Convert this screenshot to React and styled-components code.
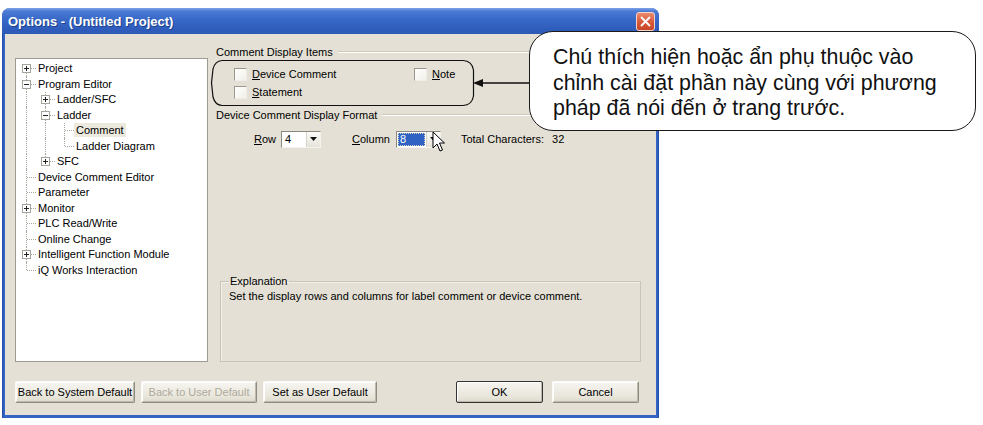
import React from "react";
import styled, { createGlobalStyle } from "styled-components";

const GlobalStyle = createGlobalStyle`
  body {
    margin: 0;
    background: #fff;
  }
`;

const UI = `"Liberation Sans", Arial, sans-serif`;

const treeItems = [
  { label: "Project", level: 0, exp: "+" },
  { label: "Program Editor", level: 0, exp: "-" },
  { label: "Ladder/SFC", level: 1, exp: "+" },
  { label: "Ladder", level: 1, exp: "-" },
  { label: "Comment", level: 2, selected: true },
  { label: "Ladder Diagram", level: 2 },
  { label: "SFC", level: 1, exp: "+" },
  { label: "Device Comment Editor", level: 0 },
  { label: "Parameter", level: 0 },
  { label: "Monitor", level: 0, exp: "+" },
  { label: "PLC Read/Write", level: 0 },
  { label: "Online Change", level: 0 },
  { label: "Intelligent Function Module", level: 0, exp: "+" },
  { label: "iQ Works Interaction", level: 0 },
];

// work out the dotted connector for every column of every row
function buildRows(items) {
  const hasNext = (idx, level) => {
    for (let j = idx + 1; j < items.length; j++) {
      if (items[j].level < level) return false;
      if (items[j].level === level) return true;
    }
    return false;
  };
  return items.map((item, i) => {
    const anc = [];
    let lvl = item.level;
    for (let j = i - 1; j >= 0 && lvl > 0; j--) {
      if (items[j].level < lvl) {
        anc.unshift(j);
        lvl = items[j].level;
      }
    }
    const cells = anc.map((a) => ({ v: hasNext(a, items[a].level) ? "full" : "none", h: false }));
    const next = hasNext(i, item.level);
    let v = next ? "full" : "top";
    if (i === 0) v = next ? "bottom" : "none";
    cells.push({ v, h: true, exp: item.exp });
    return { ...item, cells };
  });
}

function Tree() {
  const rows = buildRows(treeItems);
  return (
    <TreePanel>
      {rows.map((row) => (
        <TreeRow key={row.label}>
          {row.cells.map((c, k) => (
            <Cell key={k} $v={c.v} $h={c.h}>
              {c.exp && <Expander $plus={c.exp === "+"} />}
            </Cell>
          ))}
          <TreeLabel $selected={row.selected}>{row.label}</TreeLabel>
        </TreeRow>
      ))}
    </TreePanel>
  );
}

function Check({ children }) {
  return (
    <CheckItem>
      <Box />
      <span>{children}</span>
    </CheckItem>
  );
}

function Combo({ width, value, selected }) {
  return (
    <ComboBox style={{ width }}>
      <ComboValue $selected={selected}>{value}</ComboValue>
      <ComboArrow>
        <svg width="7" height="4" viewBox="0 0 7 4">
          <path d="M0 0h7L3.5 4z" fill="#111" />
        </svg>
      </ComboArrow>
    </ComboBox>
  );
}

export default function App() {
  return (
    <>
      <GlobalStyle />
      <Stage>
        <Window>
          <TitleBar>
            <span>Options - (Untitled Project)</span>
            <CloseButton>
              <svg width="11" height="11" viewBox="0 0 11 11">
                <path d="M1.5 1.5l8 8M9.5 1.5l-8 8" stroke="#fff" strokeWidth="1.8" strokeLinecap="round" />
              </svg>
            </CloseButton>
          </TitleBar>
          <Body>
            <Tree />
            <Settings>
              <GroupHeader>Comment Display Items</GroupHeader>
              <CheckGrid>
                <Check><u>D</u>evice Comment</Check>
                <Check><u>N</u>ote</Check>
                <Check><u>S</u>tatement</Check>
              </CheckGrid>
              <GroupHeader $top={8}>Device Comment Display Format</GroupHeader>
              <FormatRow>
                <span><u>R</u>ow</span>
                <Gap $w={5} />
                <Combo width={40} value="4" />
                <Gap $w={31} />
                <span><u>C</u>olumn</span>
                <Gap $w={6} />
                <Combo width={45} value="8" selected />
                <Gap $w={20} />
                <span>Total Characters:</span>
                <Gap $w={8} />
                <span>32</span>
              </FormatRow>
              <Explanation>
                <legend>Explanation</legend>
                <p>Set the display rows and columns for label comment or device comment.</p>
              </Explanation>
            </Settings>
            <Footer>
              <ButtonGroup $gap={6}>
                <Button $w={120}>Back to System Default</Button>
                <Button $w={116} disabled>Back to User Default</Button>
                <Button $w={114}>Set as User Default</Button>
              </ButtonGroup>
              <ButtonGroup $gap={9}>
                <Button $w={87} $default>OK</Button>
                <Button $w={87}>Cancel</Button>
              </ButtonGroup>
            </Footer>
          </Body>
        </Window>

        <Outline width="268" height="48" viewBox="0 0 268 48">
          <path
            d="M13 1.5H254Q263 2 264.5 11V37Q263 46 254 46.5H13Q6 46 4 38L2.5 24L4 10Q6 2 13 1.5Z"
            fill="none"
            stroke="#111"
            strokeWidth="1.2"
          />
        </Outline>
        <Arrow width="60" height="10" viewBox="0 0 60 10">
          <path d="M9 5H60" stroke="#111" strokeWidth="1.4" />
          <path d="M1 5L11 1V9Z" fill="#111" />
        </Arrow>
        <Cursor width="14" height="22" viewBox="0 0 14 22">
          <path d="M1 1V17L5 13L8 20L10.5 19L7.5 12H12.5Z" fill="#fff" stroke="#000" strokeWidth="1" strokeLinejoin="round" />
        </Cursor>
        <Callout>
          <span>Chú thích hiện hoặc ẩn phụ thuộc vào</span>
          <span>chỉnh cài đặt phần này cùng với phương</span>
          <span>pháp đã nói đến ở trang trước.</span>
        </Callout>
      </Stage>
    </>
  );
}

const Stage = styled.div`
  position: relative;
  width: 983px;
  height: 425px;
  overflow: hidden;
  background: #fff;
`;

const Window = styled.div`
  margin: 8px 0 0 2px;
  width: 657px;
  height: 410px;
  display: flex;
  flex-direction: column;
  background: linear-gradient(90deg, #1f4aa6, #3565c4 2px, #3565c4 calc(100% - 2px), #1f4aa6);
  border-radius: 8px 8px 0 0;
  box-sizing: border-box;
`;

const TitleBar = styled.div`
  height: 26px;
  flex: 0 0 26px;
  display: flex;
  align-items: center;
  justify-content: space-between;
  padding: 0 4px 0 6px;
  border-radius: 8px 8px 0 0;
  background: linear-gradient(180deg, #7ea3e6 0%, #4b7bd4 12%, #3868c8 45%, #2f5dbc 80%, #2d59b6 100%);
  color: #fff;
  font: bold 13px ${UI};
  text-shadow: 1px 1px 0 #1d3f8c;
`;

const CloseButton = styled.div`
  width: 19px;
  height: 19px;
  box-sizing: border-box;
  display: flex;
  align-items: center;
  justify-content: center;
  border: 1px solid #f4d5cc;
  border-radius: 3px;
  background: linear-gradient(180deg, #ec8a6c, #d8583a 55%, #c6462a);
`;

const Body = styled.div`
  flex: 1;
  margin: 0 3px 3px;
  background: #e4e0d5;
  padding: 12px 9px 12px 10px;
  display: grid;
  grid-template-columns: 193px 1fr;
  grid-template-rows: 316px 22px;
  column-gap: 5px;
  row-gap: 19px;
  font: 11px ${UI};
  color: #000;
`;

const TreePanel = styled.div`
  margin-top: 12px;
  height: 304px;
  box-sizing: border-box;
  background: #fff;
  border: 1px solid #9d9b92;
  padding: 1.5px 0 0 1px;
`;

const TreeRow = styled.div`
  display: flex;
  align-items: center;
  height: 15.5px;
  white-space: nowrap;
`;

const Cell = styled.span`
  position: relative;
  flex: 0 0 19px;
  height: 100%;
  &::before {
    content: "";
    position: absolute;
    left: 9px;
    top: ${(p) => (p.$v === "bottom" ? "50%" : "0")};
    height: ${(p) => (p.$v === "full" ? "100%" : p.$v === "none" ? "0" : "50%")};
    border-left: 1px dotted #aaa79d;
  }
  &::after {
    content: "";
    position: absolute;
    left: 10px;
    top: 50%;
    width: ${(p) => (p.$h ? "9px" : "0")};
    border-top: 1px dotted #aaa79d;
  }
`;

const Expander = styled.span`
  position: absolute;
  z-index: 1;
  left: 5px;
  top: 3.5px;
  width: 9px;
  height: 9px;
  box-sizing: border-box;
  border: 1px solid #a5a39a;
  background: #fff;
  &::before {
    content: "";
    position: absolute;
    left: 1px;
    top: 3px;
    width: 5px;
    height: 1px;
    background: #222;
  }
  &::after {
    content: "";
    display: ${(p) => (p.$plus ? "block" : "none")};
    position: absolute;
    left: 3px;
    top: 1px;
    width: 1px;
    height: 5px;
    background: #222;
  }
`;

const TreeLabel = styled.span`
  padding: 1px 2px;
  line-height: 12px;
  background: ${(p) => (p.$selected ? "#ece9de" : "transparent")};
`;

const Settings = styled.div`
  display: flex;
  flex-direction: column;
`;

const GroupHeader = styled.div`
  display: flex;
  align-items: center;
  gap: 5px;
  height: 12px;
  margin-top: ${(p) => p.$top || 0}px;
  padding-left: 3px;
  white-space: nowrap;
  &::after {
    content: "";
    flex: 1;
    border-top: 1px solid #cdc9bb;
    border-bottom: 1px solid #fff;
  }
`;

const CheckGrid = styled.div`
  display: grid;
  grid-template-columns: 180px auto;
  grid-auto-rows: 18px;
  margin-top: 7px;
  padding-left: 21px;
`;

const CheckItem = styled.label`
  display: flex;
  align-items: center;
  gap: 5px;
`;

const Box = styled.span`
  width: 11px;
  height: 11px;
  border: 1px solid;
  border-color: #9a988e #efede6 #efede6 #9a988e;
  background: linear-gradient(135deg, #ffffff, #f1efe8);
`;

const FormatRow = styled.div`
  display: flex;
  align-items: center;
  height: 18px;
  margin-top: 9px;
  padding-left: 41px;
  white-space: nowrap;
`;

const Gap = styled.span`
  flex: 0 0 ${(p) => p.$w}px;
`;

const ComboBox = styled.span`
  display: flex;
  height: 17px;
  box-sizing: border-box;
  border: 1px solid;
  border-color: #8a887f #f4f3ee #f4f3ee #8a887f;
  background: #fff;
`;

const ComboValue = styled.span`
  flex: 1;
  margin: 1px;
  padding-left: 2px;
  line-height: 13px;
  color: ${(p) => (p.$selected ? "#fff" : "#000")};
  background: ${(p) => (p.$selected ? "#2f62c2" : "transparent")};
  outline: ${(p) => (p.$selected ? "1px dotted #d9d4c0" : "none")};
  outline-offset: -1px;
`;

const ComboArrow = styled.span`
  flex: 0 0 13px;
  display: flex;
  align-items: center;
  justify-content: center;
  background: linear-gradient(180deg, #fbfbf8, #e6e3da);
  border-left: 1px solid #d6d3c8;
`;

const Explanation = styled.fieldset`
  margin: auto 6px 0 7px;
  height: 87px;
  box-sizing: border-box;
  padding: 0 8px 6px;
  border: 1px solid #c8c4b6;
  box-shadow: inset 1px 1px 0 #f2f0ea;
  legend {
    padding: 0 1px;
    margin-left: 0;
  }
  p {
    margin: 3px 0 0;
  }
`;

const Footer = styled.div`
  grid-column: 1 / -1;
  display: flex;
  justify-content: space-between;
  align-items: center;
  padding-right: 8px;
`;

const ButtonGroup = styled.div`
  display: flex;
  gap: ${(p) => p.$gap}px;
`;

const Button = styled.button`
  width: ${(p) => p.$w}px;
  height: 22px;
  padding: 0;
  box-sizing: border-box;
  font: 11px ${UI};
  color: #000;
  border: 1px solid;
  border-color: ${(p) => (p.$default ? "#333 #333 #333 #333" : "#fbfaf7 #8d8b81 #8d8b81 #fbfaf7")};
  border-radius: 2px;
  background: linear-gradient(180deg, #f6f5f0, #e9e6dc 70%, #dedacd);
  box-shadow: inset -1px -1px 0 #bdb9ad, inset 1px 1px 0 #ffffff;
  &:disabled {
    color: #aeaa9c;
  }
`;

const Outline = styled.svg`
  position: absolute;
  left: 209px;
  top: 59px;
`;

const Arrow = styled.svg`
  position: absolute;
  left: 472px;
  top: 78px;
`;

const Cursor = styled.svg`
  position: absolute;
  left: 432px;
  top: 131px;
`;

const Callout = styled.div`
  position: absolute;
  left: 529px;
  top: 31px;
  width: 447px;
  height: 100px;
  box-sizing: border-box;
  display: flex;
  flex-direction: column;
  padding: 13px 0 0 23px;
  border: 1.5px solid #1a1a1a;
  border-radius: 24px;
  background: #fff;
  font: 21.4px/25.5px ${UI};
  color: #111;
  white-space: nowrap;
`;
